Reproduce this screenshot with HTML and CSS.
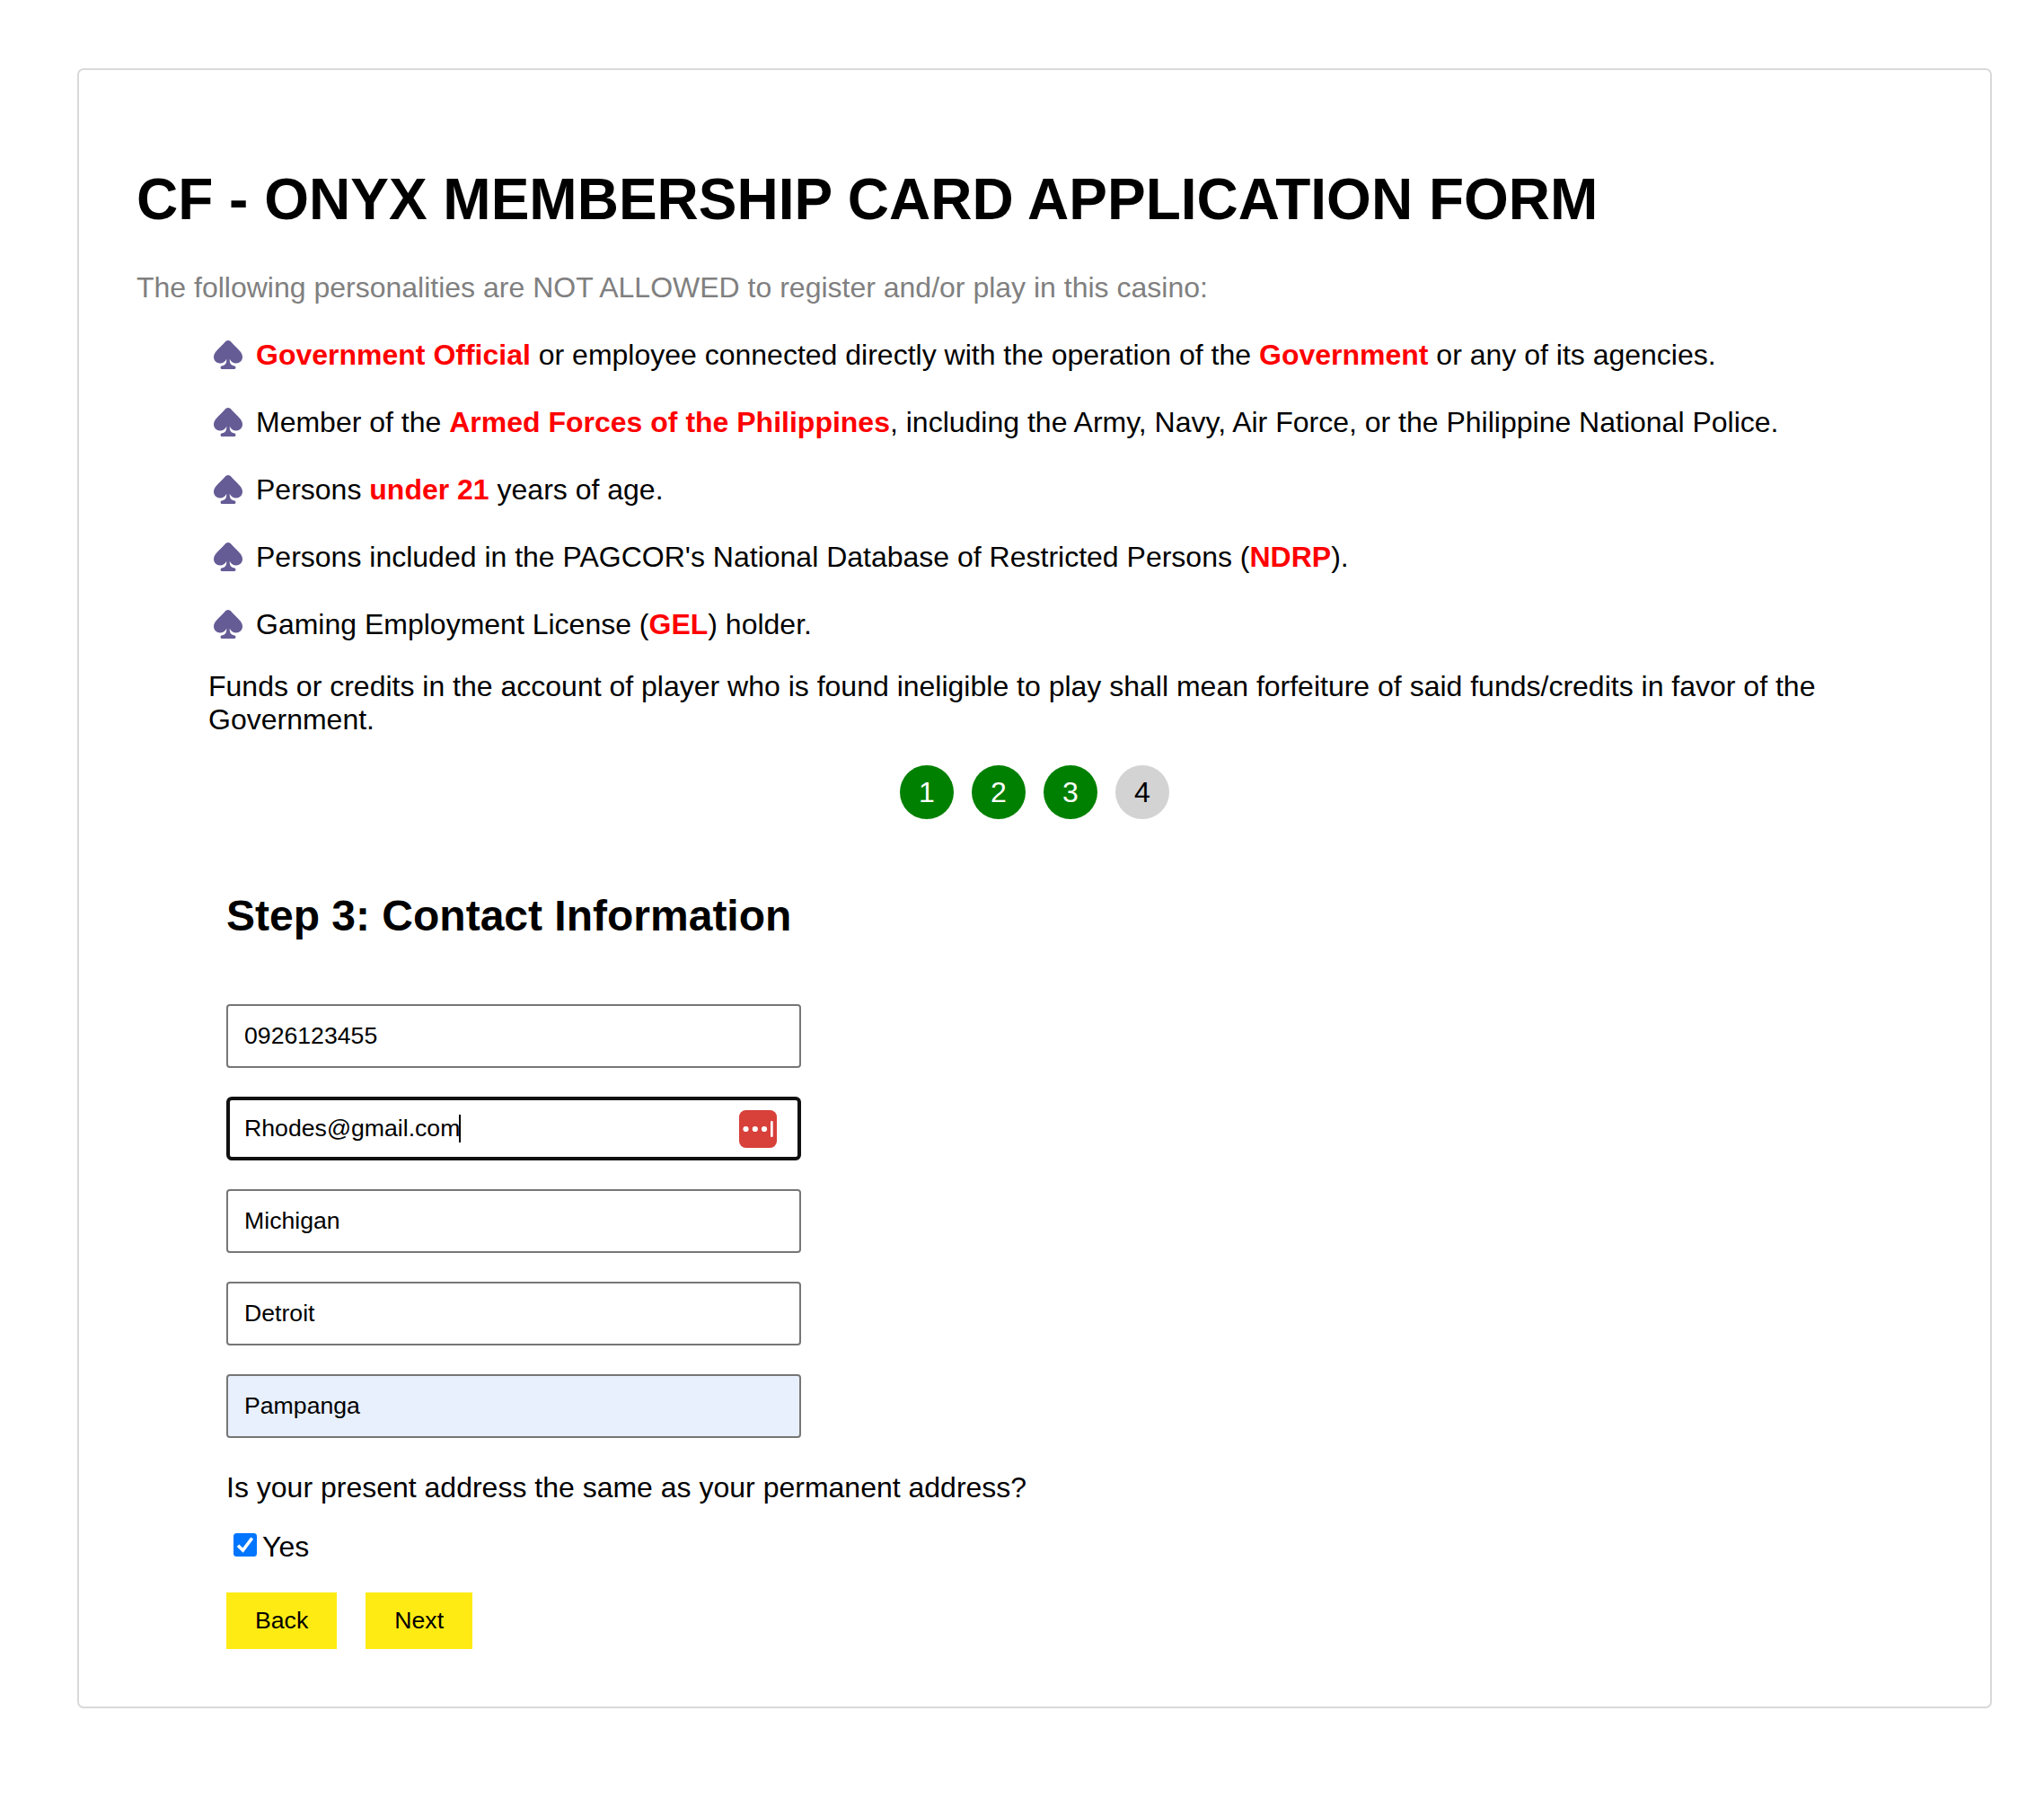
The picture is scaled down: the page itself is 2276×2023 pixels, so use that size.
FILE: index.html
```html
<!DOCTYPE html>
<html lang="en">
<head>
<meta charset="utf-8">
<title>CF - Onyx Membership Card Application Form</title>
<link rel="stylesheet" href="styles.css">
</head>
<body>
<svg width="0" height="0" class="defs">
  <symbol id="spade" viewBox="0 0 32 32">
    <path d="M16 0C14.6 0 13.5.7 12.4 1.9C9.500 5.300 5.600 8.800 2.800 11.900C1 14 0 16 0 18.600C0 22.700 3.200 25.500 7 25.500C10.300 25.500 12.900 23.900 14.200 20.800C14.500 25 13 28 9.500 28.200C6.900 28.300 6.900 32 9.500 32H22.500C25.100 32 25.100 28.300 22.500 28.200C19 28 17.500 25 17.800 20.800C19.100 23.900 21.700 25.500 25 25.500C28.800 25.500 32 22.700 32 18.600C32 16 31 14 29.200 11.900C26.400 8.800 22.500 5.300 19.600 1.900C18.500.7 17.400 0 16 0Z"/>
  </symbol>
</svg>
<main class="card">
  <h1>CF - ONYX MEMBERSHIP CARD APPLICATION FORM</h1>
  <p class="lead">The following personalities are NOT ALLOWED to register and/or play in this casino:</p>
  <ul class="rules">
    <li><svg class="spade"><use href="#spade"/></svg><span><b>Government Official</b> or employee connected directly with the operation of the <b>Government</b> or any of its agencies.</span></li>
    <li><svg class="spade"><use href="#spade"/></svg><span>Member of the <b>Armed Forces of the Philippines</b>, including the Army, Navy, Air Force, or the Philippine National Police.</span></li>
    <li><svg class="spade"><use href="#spade"/></svg><span>Persons <b>under 21</b> years of age.</span></li>
    <li><svg class="spade"><use href="#spade"/></svg><span>Persons included in the PAGCOR's National Database of Restricted Persons (<b>NDRP</b>).</span></li>
    <li><svg class="spade"><use href="#spade"/></svg><span>Gaming Employment License (<b>GEL</b>) holder.</span></li>
  </ul>
  <p class="funds">Funds or credits in the account of player who is found ineligible to play shall mean forfeiture of said funds/credits in favor of the Government.</p>
  <div class="steps">
    <span class="step done">1</span>
    <span class="step done">2</span>
    <span class="step done">3</span>
    <span class="step">4</span>
  </div>
  <form class="form">
    <h2>Step 3: Contact Information</h2>
    <div class="fields">
      <div class="field">0926123455</div>
      <div class="field focused">
        <span class="value">Rhodes@gmail.com</span>
        <svg class="manager" viewBox="0 0 42 42">
          <rect width="42" height="42" rx="7.500" fill="#d8403a"/>
          <g fill="#fff">
            <circle cx="7.500" cy="21" r="3.100"/>
            <circle cx="17.800" cy="21" r="3.100"/>
            <circle cx="28" cy="21" r="3.100"/>
            <rect x="35" y="12" width="2.700" height="18" rx="1.200"/>
          </g>
        </svg>
      </div>
      <div class="field">Michigan</div>
      <div class="field">Detroit</div>
      <div class="field autofilled">Pampanga</div>
    </div>
    <p class="question">Is your present address the same as your permanent address?</p>
    <label class="answer">
      <svg class="check" viewBox="0 0 26 26">
        <rect width="26" height="26" rx="3.500" fill="#0075ff"/>
        <path d="M5 13.800L10.500 19.100L20.700 5.500" fill="none" stroke="#fff" stroke-width="3.600"/>
      </svg>
      <span>Yes</span>
    </label>
    <div class="actions">
      <button type="button" class="btn">Back</button>
      <button type="button" class="btn">Next</button>
    </div>
  </form>
</main>
</body>
</html>
```
FILE: styles.css
```css
* { box-sizing: border-box; }

body {
  margin: 0;
  padding: 76px 58px 0 86px;
  background: #fff;
  color: #000;
  font: 32px/37px "Liberation Sans", Arial, sans-serif;
}

.defs { position: absolute; }

.card {
  height: 1826px;
  padding: 107px 64px 64px;
  border: 2px solid #d9d9d9;
  border-radius: 7px;
}

h1, h2, p, ul { margin: 0; padding: 0; }

h1 { font-size: 64px; line-height: 74px; }

.lead { margin-top: 43px; color: #808080; }

.rules {
  display: flex;
  flex-direction: column;
  gap: 38px;
  margin-top: 38px;
  padding-left: 86px;
  list-style: none;
}

.rules li { display: flex; gap: 14px; }
.rules b { color: #f00; }

.spade {
  width: 32px;
  height: 32px;
  margin-top: 2px;
  flex: none;
  fill: #655c96;
}

.rules li > span { padding-left: 1px; }

.funds { margin: 32px 80px 0; }

.steps {
  display: flex;
  justify-content: center;
  gap: 20px;
  margin-top: 32px;
}

.step {
  width: 60px;
  height: 60px;
  border-radius: 50%;
  background: #d3d3d3;
  line-height: 60px;
  text-align: center;
}

.step.done { background: #008000; color: #fff; }

.form { margin-top: 80px; padding-left: 100px; }

h2 { font-size: 48px; line-height: 55px; }

.fields {
  display: flex;
  flex-direction: column;
  gap: 32px;
  width: 640px;
  margin-top: 71px;
}

.field {
  display: flex;
  align-items: center;
  height: 71px;
  padding: 0 18px;
  border: 2px solid #767676;
  border-radius: 4px;
  font-size: 26.667px;
  line-height: 31px;
}

.focused {
  justify-content: space-between;
  padding: 0 23px 0 16px;
  border: 4px solid #101010;
  border-radius: 6px;
}

.focused .value { margin-right: -1px; box-shadow: 1px 0 0 #000, inset -1px 0 0 #000; }

.manager { width: 42px; height: 42px; }

.autofilled { background: #e8f0fe; }

.question { margin-top: 37px; }

.answer {
  display: flex;
  gap: 6px;
  margin-top: 29px;
  padding-left: 8px;
}

.check { width: 26px; height: 26px; margin-top: 3px; }

.actions { display: flex; gap: 32px; margin-top: 32px; }

.btn {
  height: 63px;
  padding: 0 32px;
  border: 0;
  background: #ffeb14;
  color: #000;
  font: 26.667px/31px "Liberation Sans", Arial, sans-serif;
}
```
